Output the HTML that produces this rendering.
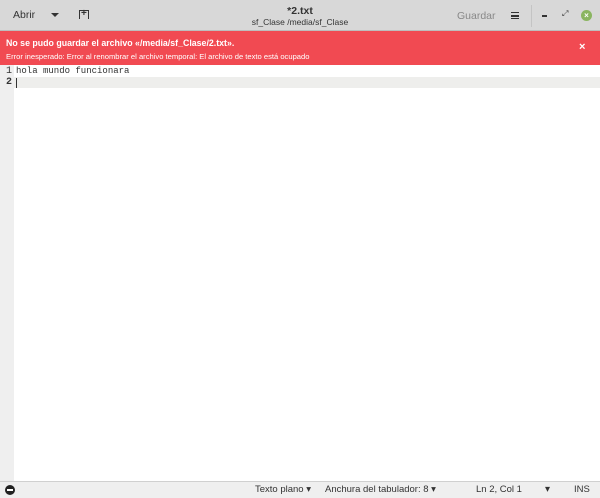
<!DOCTYPE html>
<html><head><style>
*{margin:0;padding:0;box-sizing:border-box}
body{width:600px;height:498px;overflow:hidden;font-family:"Liberation Sans",sans-serif;background:#fff;position:relative}
.hdr{position:absolute;left:0;top:0;width:600px;height:31px;background:#d8d8d8;border-bottom:1px solid #bdbdbd}
.t{position:absolute;font-size:11px;color:#333;white-space:nowrap}
.err{position:absolute;left:0;top:31px;width:600px;height:34px;background:#f14a52;color:#fff}
.gut{position:absolute;left:0;top:65px;width:14px;height:416px;background:#efefef}
.mono{font-family:"Liberation Mono",monospace;font-size:9px;color:#333}
.st{position:absolute;left:0;top:481px;width:600px;height:17px;background:#efefef;border-top:1px solid #d0d0d0}
.st span{position:absolute;top:2px;font-size:10px;color:#333;white-space:nowrap}
</style></head><body>
<div class="hdr">
<div class="t" style="left:13px;top:9px;font-size:10.5px">Abrir</div>
<div style="position:absolute;left:51px;top:13px;border-left:4px solid transparent;border-right:4px solid transparent;border-top:4px solid #333"></div>
<div style="position:absolute;left:79px;top:10px;width:10px;height:9px;border:1.5px solid #333;border-bottom:none"></div>
<div class="t" style="left:81px;top:9px;font-size:10px;font-weight:bold;line-height:10px">+</div>
<div class="t" style="left:0;width:600px;text-align:center;top:5px;font-weight:bold;font-size:10.5px">*2.txt</div>
<div class="t" style="left:0;width:600px;text-align:center;top:17px;font-size:8.5px">sf_Clase /media/sf_Clase</div>
<div class="t" style="left:457px;top:10px;color:#888;font-size:10.5px">Guardar</div>
<div style="position:absolute;left:511px;top:12px;width:8px;height:7px;border-top:1.5px solid #333;border-bottom:1.5px solid #333"></div>
<div style="position:absolute;left:511px;top:15px;width:8px;height:1.5px;background:#333"></div>
<div style="position:absolute;left:531px;top:5px;width:1px;height:22px;background:#c4c4c4"></div>
<div style="position:absolute;left:542px;top:15px;width:5px;height:1.5px;background:#333"></div>
<div class="t" style="left:562px;top:9px;font-size:8px">⤢</div>
<div style="position:absolute;left:581px;top:10px;width:11px;height:11px;border-radius:50%;background:#8ab560;color:#fff;font-size:8px;text-align:center;line-height:11px;font-weight:bold">×</div>
</div>
<div class="err">
<div class="t" style="left:6px;top:7px;color:#fff;font-weight:bold;font-size:8.8px">No se pudo guardar el archivo «/media/sf_Clase/2.txt».</div>
<div class="t" style="left:6px;top:21px;color:#fff;font-size:7.6px">Error inesperado: Error al renombrar el archivo temporal: El archivo de texto está ocupado</div>
<div class="t" style="left:579px;top:10px;color:#fff;font-weight:bold;font-size:11px">×</div>
</div>
<div class="gut"></div>
<div style="position:absolute;left:14px;top:77px;width:586px;height:11px;background:#eeeeec"></div>
<div class="mono" style="position:absolute;left:6px;top:66px;line-height:11px;font-size:10px">1</div>
<div class="mono" style="position:absolute;left:6px;top:77px;line-height:11px;font-weight:bold;font-size:10px">2</div>
<div class="mono" style="position:absolute;left:16px;top:66px;line-height:11px">hola mundo funcionara</div>
<div style="position:absolute;left:16px;top:78px;width:1px;height:10px;background:#333"></div>
<div class="st">
<div style="position:absolute;left:5px;top:3px;width:10px;height:10px;border-radius:50%;background:#222"><div style="position:absolute;left:2px;top:4px;width:6px;height:2px;background:#fff"></div></div>
<span style="left:255px;font-size:9.5px">Texto plano ▾</span>
<span style="left:325px;font-size:9.5px">Anchura del tabulador: 8 ▾</span>
<span style="left:476px;font-size:9.5px">Ln 2, Col 1</span>
<span style="left:545px">▾</span>
<span style="left:574px;font-size:9.5px">INS</span>
</div>
</body></html>
